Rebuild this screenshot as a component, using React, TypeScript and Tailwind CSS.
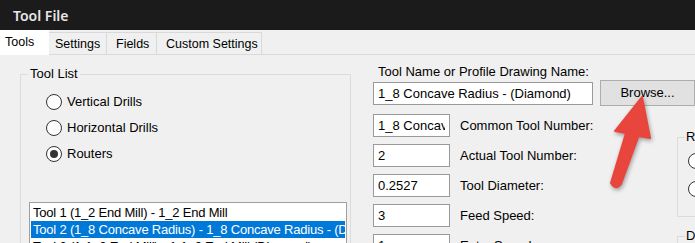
const tabs = [
  { label: 'Tools', width: 'w-[49px]', pad: 'pl-[5px]', active: true },
  { label: 'Settings', width: 'w-[58px]', pad: 'pl-[6px]', active: false },
  { label: 'Fields', width: 'w-[50px]', pad: 'pl-[9px]', active: false },
  { label: 'Custom Settings', width: 'w-[105px]', pad: 'pl-[9px]', active: false },
];

const toolRows = [
  'Tool 1 (1_2 End Mill) - 1_2 End Mill',
  'Tool 2 (1_8 Concave Radius) - 1_8 Concave Radius - (Diamond)',
  'Tool 3 (1-1_2 End Mill) - 1-1_2 End Mill (Diamond)',
];

const fields = [
  { value: '1_8 Concave Radius', label: 'Common Tool Number:' },
  { value: '2', label: 'Actual Tool Number:' },
  { value: '0.2527', label: 'Tool Diameter:' },
  { value: '3', label: 'Feed Speed:' },
  { value: '1', label: 'Entry Speed:' },
];

function Radio({ label, checked }: { label: string; checked?: boolean }) {
  return (
    <div className="flex items-center h-[16px] gap-[5px]">
      <span className="w-[16px] h-[16px] rounded-full border-[1.5px] border-[#333333] bg-white flex items-center justify-center shrink-0">
        {checked && <span className="w-[8px] h-[8px] rounded-full bg-[#333333]" />}
      </span>
      <span className="leading-[16px]">{label}</span>
    </div>
  );
}

function Arrow() {
  // red callout arrow pointing at the Browse button
  return (
    <svg
      className="absolute left-[600px] top-[90px] drop-shadow-[1px_2px_2px_rgba(0,0,0,0.35)]"
      width="60"
      height="110"
      viewBox="0 0 60 110"
    >
      <path
        d="M42 7 L50 48 L38.5 46 L21 94 Q16 101 11 93 L26 43 L15 41 Z"
        fill="#e8453c"
        stroke="#e8453c"
        strokeWidth="2"
        strokeLinejoin="round"
      />
    </svg>
  );
}

export default function App() {
  return (
    <div className="relative w-[695px] h-[243px] overflow-hidden bg-[#f0f0f0] text-[13px] text-black font-['Liberation_Sans',Arial,sans-serif]">
      {/* Window title */}
      <div className="h-[30px] bg-[#1b1b1b] flex items-center pl-[13px] text-[#e6e6e6] text-[14px] font-semibold font-['Noto_Sans',sans-serif]">
        Tool File
      </div>

      {/* Tab strip */}
      <div className="flex items-end h-[25px] border-b border-[#dadada] text-[12.5px]">
        {tabs.map((t) =>
          t.active ? (
            <div key={t.label} className={`${t.width} ${t.pad} h-[25px] -mb-px pt-[4px] leading-[16px] bg-white relative`}>
              {t.label}
            </div>
          ) : (
            <div
              key={t.label}
              className={`${t.width} ${t.pad} h-[22px] pt-[3px] leading-[16px] border-t border-r border-[#d9d9d9] bg-[#f0f0f0] first-of-type:border-l`}
            >
              {t.label}
            </div>
          )
        )}
      </div>

      <div className="flex">
        {/* Tool List group */}
        <fieldset className="ml-[20px] mt-[11px] w-[331px] h-[200px] border border-[#dcdcdc]">
          <legend className="ml-[7px] px-[2px] leading-[16px]">Tool List</legend>
          <div className="pl-[25px] mt-[12px] flex flex-col gap-[10px]">
            <Radio label="Vertical Drills" />
            <Radio label="Horizontal Drills" />
            <Radio label="Routers" checked />
          </div>
          <div className="ml-[8px] mt-[40px] w-[318px] h-[120px] border border-[#a0a0a0] bg-white py-[1px] tracking-[-0.2px]">
            {toolRows.map((row, i) => (
              <div
                key={row}
                className={`mx-[1px] pl-[2px] h-[17px] leading-[17px] whitespace-nowrap overflow-hidden ${
                  i === 1 ? 'bg-[#0078d7] text-white' : ''
                }`}
              >
                {row}
              </div>
            ))}
          </div>
        </fieldset>

        {/* Tool details */}
        <div className="ml-[22px] pt-[9px] flex-1 min-w-0">
          <div className="pl-[5px] h-[16px] leading-[16px]">Tool Name or Profile Drawing Name:</div>
          <div className="flex h-[26px]">
            <input
              readOnly
              value="1_8 Concave Radius - (Diamond)"
              className="mt-[2px] w-[220px] h-[23px] px-[4px] border border-[#9a9a9a] bg-white outline-none"
            />
            <button className="ml-[7px] w-[95px] h-[26px] shrink-0 border border-[#adadad] bg-[#e1e1e1] text-center leading-[22px]">
              Browse...
            </button>
          </div>

          <div className="flex mt-[8px]">
            <div className="w-[304px] shrink-0 flex flex-col gap-[7px]">
              {fields.map((f) => (
                <div key={f.label} className="flex items-center h-[23px] gap-[10px]">
                  <input
                    readOnly
                    value={f.value}
                    className="w-[77px] h-[23px] px-[4px] border border-[#9a9a9a] bg-white outline-none"
                  />
                  <span className="leading-[16px]">{f.label}</span>
                </div>
              ))}
            </div>
            <div className="flex flex-col shrink-0">
              <fieldset className="mt-[15px] w-[60px] h-[88px] border border-[#dcdcdc]">
                <legend className="ml-[7px] px-[1px] leading-[16px]">R</legend>
                <div className="pl-[10px] mt-[8px] flex flex-col gap-[12px]">
                  <span className="w-[16px] h-[16px] rounded-full border-[1.5px] border-[#333333] bg-white" />
                  <span className="w-[16px] h-[16px] rounded-full border-[1.5px] border-[#333333] bg-white" />
                </div>
              </fieldset>
              <fieldset className="mt-[11px] w-[60px] h-[60px] border border-[#dcdcdc]">
                <legend className="ml-[7px] px-[1px] leading-[16px]">D</legend>
              </fieldset>
            </div>
          </div>
        </div>
      </div>

      <Arrow />
    </div>
  );
}
